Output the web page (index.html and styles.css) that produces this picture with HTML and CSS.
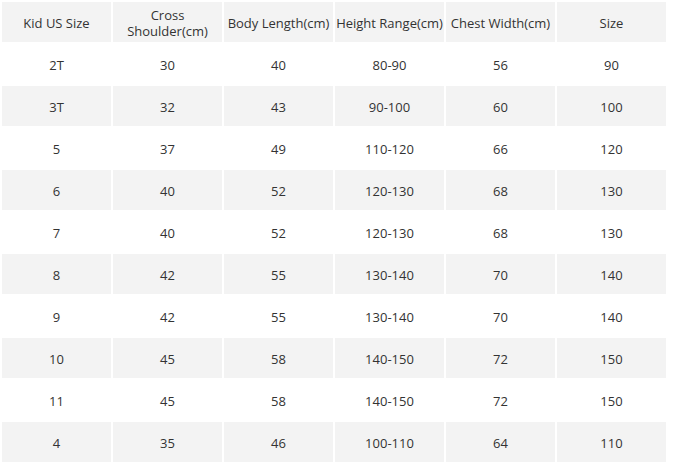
FILE: index.html
```html
<!DOCTYPE html>
<html>
<head>
<meta charset="utf-8">
<link rel="stylesheet" href="styles.css">
</head>
<body>
<table class="size-table">
  <tr class="row-gray">
    <td>Kid US Size</td>
    <td>Cross<br>Shoulder(cm)</td>
    <td>Body Length(cm)</td>
    <td>Height Range(cm)</td>
    <td>Chest Width(cm)</td>
    <td>Size</td>
  </tr>
  <tr class="row-white"><td>2T</td><td>30</td><td>40</td><td>80-90</td><td>56</td><td>90</td></tr>
  <tr class="row-gray"><td>3T</td><td>32</td><td>43</td><td>90-100</td><td>60</td><td>100</td></tr>
  <tr class="row-white"><td>5</td><td>37</td><td>49</td><td>110-120</td><td>66</td><td>120</td></tr>
  <tr class="row-gray"><td>6</td><td>40</td><td>52</td><td>120-130</td><td>68</td><td>130</td></tr>
  <tr class="row-white"><td>7</td><td>40</td><td>52</td><td>120-130</td><td>68</td><td>130</td></tr>
  <tr class="row-gray"><td>8</td><td>42</td><td>55</td><td>130-140</td><td>70</td><td>140</td></tr>
  <tr class="row-white"><td>9</td><td>42</td><td>55</td><td>130-140</td><td>70</td><td>140</td></tr>
  <tr class="row-gray"><td>10</td><td>45</td><td>58</td><td>140-150</td><td>72</td><td>150</td></tr>
  <tr class="row-white"><td>11</td><td>45</td><td>58</td><td>140-150</td><td>72</td><td>150</td></tr>
  <tr class="row-gray"><td>4</td><td>35</td><td>46</td><td>100-110</td><td>64</td><td>110</td></tr>
</table>
</body>
</html>
```
FILE: styles.css
```css
html, body {
  margin: 0;
  padding: 0;
  background: #ffffff;
}
.size-table {
  border-collapse: separate;
  border-spacing: 2px;
  table-layout: fixed;
  width: 668px;
  font-family: "Open Sans", "Liberation Sans", sans-serif;
  font-size: 13px;
  line-height: 16px;
  color: #333333;
}
.size-table td {
  width: 109px;
  height: 40px;
  padding: 2px 0 0 0;
  text-align: center;
  vertical-align: middle;
  box-sizing: border-box;
}
.row-gray td {
  background: #f3f3f3;
}
.row-white td {
  background: #ffffff;
}
```
